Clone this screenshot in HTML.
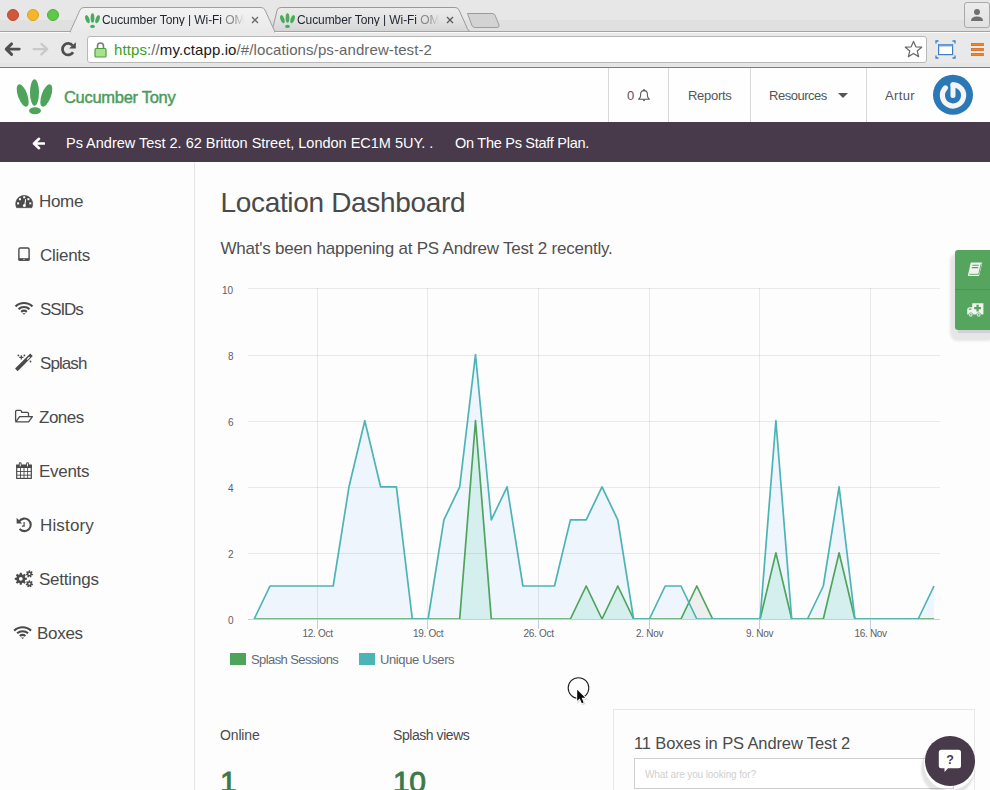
<!DOCTYPE html>
<html><head><meta charset="utf-8">
<style>
*{box-sizing:border-box;margin:0;padding:0}
html,body{width:990px;height:790px;overflow:hidden;background:#fdfdfd;font-family:"Liberation Sans",sans-serif;color:#4a4a4a}
.abs{position:absolute}
.t{position:absolute;white-space:nowrap;line-height:1}

</style></head><body>
<!-- browser chrome -->
<svg class="abs" style="left:0;top:0" width="990" height="68" viewBox="0 0 990 68">
  <rect x="0" y="0" width="990" height="68" fill="#e7e7e7"/>
  <rect x="0" y="20" width="990" height="12" fill="#e0e0e0"/>
  <!-- inactive tab 2 -->
  <defs>
    <linearGradient id="tg2" x1="0" y1="0" x2="0" y2="1">
      <stop offset="0" stop-color="#ececec"/><stop offset="0.5" stop-color="#e3e3e3"/><stop offset="1" stop-color="#d5d5d5"/>
    </linearGradient>
  </defs>
  <path d="M269.5,31.5 Q271.8,31.3 272.6,28.5 L277.2,10 Q278,7.5 281,7.5 L455,7.5 Q458,7.5 459,10 L467.4,28.5 Q468.3,31.3 470.5,31.5 Z" fill="url(#tg2)" stroke="#9a9a9a" stroke-width="1"/>
  <!-- new tab button -->
  <path d="M467.5,13.5 L492,13.5 Q494,13.5 495,15 L499,25 Q499.5,27.5 497,27.5 L475,27.5 Q473,27.5 472,25.5 Z" fill="#d3d3d3" stroke="#9c9c9c" stroke-width="1"/>
  <!-- toolbar -->
  <rect x="0" y="32" width="990" height="31" fill="#e9e9e9"/>
  <line x1="0" y1="31.5" x2="990" y2="31.5" stroke="#a3a3a3" stroke-width="1"/>
  <line x1="0" y1="32.5" x2="990" y2="32.5" stroke="#fafafa" stroke-width="1"/>
  <!-- active tab 1 -->
  <linearGradient id="tg1" x1="0" y1="0" x2="0" y2="1"><stop offset="0" stop-color="#f3f3f3"/><stop offset="1" stop-color="#e9e9e9"/></linearGradient>
  <path d="M70,32 L80,10 Q81,7.5 84,7.5 L261,7.5 Q264,7.5 265,10 L275,32 Z" fill="url(#tg1)" stroke="#a0a0a0" stroke-width="1"/>
  <rect x="71" y="31" width="203" height="3" fill="#e9e9e9"/>
  <!-- bottom border -->
  <rect x="0" y="63" width="990" height="4" fill="#e6e6e6"/>
  <rect x="0" y="67" width="990" height="1" fill="#7d7d7d"/>
</svg>

<!-- tab contents -->
<div class="abs" style="left:7px;top:9px;width:12px;height:12px;border-radius:50%;background:#d0573a;border:1px solid #b94a30"></div>
<div class="abs" style="left:27px;top:9px;width:12px;height:12px;border-radius:50%;background:#f5b62c;border:1px solid #dc9e1c"></div>
<div class="abs" style="left:47px;top:9px;width:12px;height:12px;border-radius:50%;background:#5ec84b;border:1px solid #4bb03a"></div>
<svg class="abs" style="left:84px;top:12px" width="17" height="17" viewBox="0 0 40 40">
  <g fill="#4caa5c"><ellipse cx="8" cy="17" rx="4.6" ry="10" transform="rotate(-18 8 17)"/><ellipse cx="20" cy="14" rx="4.4" ry="11"/><ellipse cx="32" cy="17" rx="4.6" ry="10" transform="rotate(18 32 17)"/><ellipse cx="20" cy="34" rx="5.5" ry="3.8"/></g>
</svg>
<div class="t" style="left:102px;top:13.6px;width:142px;overflow:hidden;font-size:12px;color:#1f2430;letter-spacing:-0.08px;-webkit-mask-image:linear-gradient(90deg,#000 93%,transparent 100%)">Cucumber Tony | Wi-Fi <span style="color:#888">OM</span></div>
<svg class="abs" style="left:251px;top:16px" width="8" height="8" viewBox="0 0 8 8"><path d="M1,1 L7,7 M7,1 L1,7" stroke="#6a6a6a" stroke-width="1.3"/></svg>
<svg class="abs" style="left:279px;top:12px" width="17" height="17" viewBox="0 0 40 40">
  <g fill="#4caa5c"><ellipse cx="8" cy="17" rx="4.6" ry="10" transform="rotate(-18 8 17)"/><ellipse cx="20" cy="14" rx="4.4" ry="11"/><ellipse cx="32" cy="17" rx="4.6" ry="10" transform="rotate(18 32 17)"/><ellipse cx="20" cy="34" rx="5.5" ry="3.8"/></g>
</svg>
<div class="t" style="left:297px;top:13.6px;width:142px;overflow:hidden;font-size:12px;color:#1f2430;letter-spacing:-0.08px;-webkit-mask-image:linear-gradient(90deg,#000 93%,transparent 100%)">Cucumber Tony | Wi-Fi <span style="color:#888">OM</span></div>
<svg class="abs" style="left:446px;top:16px" width="8" height="8" viewBox="0 0 8 8"><path d="M1,1 L7,7 M7,1 L1,7" stroke="#5a5a5a" stroke-width="1.3"/></svg>
<!-- profile button -->
<div class="abs" style="left:964px;top:2px;width:26px;height:26px;border:1px solid #a9a9a9;border-radius:3px;background:linear-gradient(#ececec,#e2e2e2)"></div>
<svg class="abs" style="left:969px;top:6.8px" width="16" height="16" viewBox="0 0 16 16"><circle cx="8" cy="5" r="3" fill="#6f6f6f"/><path d="M2,14 Q2,9.5 8,9.5 Q14,9.5 14,14 Z" fill="#6f6f6f"/></svg>
<!-- toolbar icons -->
<svg class="abs" style="left:0px;top:41px" width="24" height="16" viewBox="0 0 24 16"><path d="M19.2,8.1 H6.5 M11.6,2.9 L6.2,8.1 L11.6,13.4" fill="none" stroke="#505050" stroke-width="2.9" stroke-linecap="round" stroke-linejoin="round"/></svg>
<svg class="abs" style="left:28px;top:41px" width="24" height="16" viewBox="0 0 24 16"><path d="M5.6,8.1 H19.2 M13.4,2.9 L19.2,8.1 L13.4,13.4" fill="none" stroke="#c9c9c9" stroke-width="2.3" stroke-linecap="round" stroke-linejoin="round"/></svg>
<svg class="abs" style="left:60px;top:41px" width="18" height="17" viewBox="0 0 18 17"><path d="M13.08,11.25 A5.75,5.75 0 1 1 12.6,4.5" fill="none" stroke="#4e4e4e" stroke-width="2.7"/><path d="M9.1,7.6 L15.8,7.6 L15.8,1.2 Z" fill="#4e4e4e"/></svg>
<!-- url box -->
<div class="abs" style="left:87px;top:36px;width:840px;height:27px;background:#fff;border:1px solid #b8b8b8;border-radius:3px"></div>
<svg class="abs" style="left:94px;top:41px" width="13" height="17" viewBox="0 0 13 17"><path d="M3.5,8 V5 A3,3 0 0 1 9.5,5 V8" fill="none" stroke="#7a7a7a" stroke-width="1.6"/><rect x="1" y="7.5" width="11" height="8.5" rx="1" fill="#a9e28f" stroke="#4e9e3a" stroke-width="1.2"/></svg>
<div class="t" style="left:114px;top:42px;font-size:15px;letter-spacing:0.1px;color:#666"><span style="color:#3aa11c">https</span>://<span style="color:#1a1a1a">my.ctapp.io</span>/#/locations/ps-andrew-test-2</div>
<svg class="abs" style="left:904px;top:40px" width="19" height="19" viewBox="0 0 20 20"><path d="M10,1.5 L12.5,7.2 L18.6,7.6 L13.9,11.5 L15.4,17.5 L10,14.2 L4.6,17.5 L6.1,11.5 L1.4,7.6 L7.5,7.2 Z" fill="#fff" stroke="#6a6a6a" stroke-width="1.3" stroke-linejoin="round"/></svg>
<svg class="abs" style="left:935px;top:40px" width="21" height="19" viewBox="0 0 21 19"><rect x="3.6" y="4.6" width="14" height="10" fill="#fff" stroke="#3f7fc0" stroke-width="1.2"/><rect x="3.6" y="4.2" width="14" height="2.2" fill="#6a9fd6"/><path d="M1,3.5 V1 H3.5 M17.5,1 H20 V3.5 M20,15.5 V18 H17.5 M3.5,18 H1 V15.5" fill="none" stroke="#3f7fc0" stroke-width="1.3"/></svg>
<svg class="abs" style="left:970px;top:41px" width="16" height="16" viewBox="0 0 16 16"><rect x="1.5" y="2.3" width="12" height="2.4" fill="#ee8526" stroke="#c95d18" stroke-width="0.6"/><rect x="1.5" y="7.3" width="12" height="2.4" fill="#ee8526" stroke="#c95d18" stroke-width="0.6"/><rect x="1.5" y="12.3" width="12" height="2.4" fill="#ee8526" stroke="#c95d18" stroke-width="0.6"/></svg>

<!-- app header -->
<div class="abs" style="left:0;top:68px;width:990px;height:54px;background:#fefefe"></div>
<svg class="abs" style="left:14px;top:77px" width="42" height="40" viewBox="0 0 42 40">
  <g fill="#4ea45c">
    <ellipse cx="8.7" cy="18.5" rx="4.7" ry="11.8" transform="rotate(-20 8.7 18.5)"/>
    <ellipse cx="20.5" cy="15.5" rx="4.5" ry="13.2"/>
    <ellipse cx="32.3" cy="18.5" rx="4.7" ry="11.8" transform="rotate(20 32.3 18.5)"/>
    <ellipse cx="21" cy="33.8" rx="6" ry="3.5"/>
  </g>
</svg>
<div class="t" style="left:64px;top:89.2px;font-size:16.5px;color:#4a9c5a;-webkit-text-stroke:0.45px #4a9c5a;letter-spacing:-0.3px">Cucumber Tony</div>
<div class="abs" style="left:608px;top:68px;width:1px;height:54px;background:#d8d8d8"></div>
<div class="abs" style="left:668px;top:68px;width:1px;height:54px;background:#d8d8d8"></div>
<div class="abs" style="left:750px;top:68px;width:1px;height:54px;background:#d8d8d8"></div>
<div class="abs" style="left:866px;top:68px;width:1px;height:54px;background:#d8d8d8"></div>
<div class="t" style="left:627px;top:89px;font-size:13px;color:#555">0</div>
<svg class="abs" style="left:637px;top:88px" width="14" height="15" viewBox="0 0 14 15"><circle cx="7" cy="1.9" r="0.9" fill="#555"/><path d="M1.6,11.2 Q3.6,9.6 3.6,7.4 V6.3 Q3.6,2.6 7,2.6 Q10.4,2.6 10.4,6.3 V7.4 Q10.4,9.6 12.4,11.2 Z" fill="none" stroke="#555" stroke-width="1.05" stroke-linejoin="round"/><path d="M5.6,11.8 Q7,14.6 8.4,11.8 Z" fill="#555"/></svg>
<div class="t" style="left:688px;top:89px;font-size:13px;color:#555;letter-spacing:-0.28px">Reports</div>
<div class="t" style="left:769px;top:89px;font-size:13px;color:#555;letter-spacing:-0.48px">Resources</div>
<svg class="abs" style="left:837px;top:92px" width="12" height="7" viewBox="0 0 12 7"><path d="M1,1 H11 L6,6 Z" fill="#555"/></svg>
<div class="t" style="left:885px;top:89px;font-size:13px;color:#555;letter-spacing:0.36px">Artur</div>
<svg class="abs" style="left:932px;top:74px" width="42" height="42" viewBox="0 0 42 42"><circle cx="21" cy="20.8" r="20" fill="#2b78b6"/><path d="M21,10.8 V21.5" stroke="#f4f4f4" stroke-width="5" stroke-linecap="round"/><path d="M21,10.8 A10.6,10.6 0 1 1 13.5,13.9" fill="none" stroke="#f4f4f4" stroke-width="5.2" stroke-linecap="round"/></svg>

<!-- purple bar -->
<div class="abs" style="left:0;top:122px;width:990px;height:40px;background:#483a4a"></div>
<svg class="abs" style="left:32px;top:137px" width="13" height="13" viewBox="0 0 13 13"><path d="M12,6.5 H2.5 M7,1.8 L2,6.5 L7,11.2" fill="none" stroke="#fff" stroke-width="2.6" stroke-linecap="round" stroke-linejoin="round"/></svg>
<div class="t" style="left:66px;top:136px;font-size:14.5px;color:#fff;letter-spacing:-0.01px">Ps Andrew Test 2. 62 Britton Street, London EC1M 5UY. .</div>
<div class="t" style="left:455px;top:136px;font-size:14.5px;color:#fff;letter-spacing:-0.27px">On The Ps Staff Plan.</div>

<!-- sidebar -->
<div class="abs" style="left:194px;top:162px;width:1px;height:628px;background:#e4e4e4"></div>
<div id="navs">
<div class="t" style="left:39px;top:192.6px;font-size:17px;letter-spacing:-0.33px">Home</div>
<div class="t" style="left:40px;top:246.6px;font-size:17px;letter-spacing:-0.28px">Clients</div>
<div class="t" style="left:40px;top:300.6px;font-size:17px;letter-spacing:-1.1px">SSIDs</div>
<div class="t" style="left:40px;top:354.6px;font-size:17px;letter-spacing:-0.92px">Splash</div>
<div class="t" style="left:39px;top:408.6px;font-size:17px;letter-spacing:-0.5px">Zones</div>
<div class="t" style="left:39px;top:462.6px;font-size:17px;letter-spacing:-0.3px">Events</div>
<div class="t" style="left:40px;top:516.6px;font-size:17px;letter-spacing:0.16px">History</div>
<div class="t" style="left:39px;top:570.6px;font-size:17px;letter-spacing:-0.22px">Settings</div>
<div class="t" style="left:37px;top:624.6px;font-size:17px;letter-spacing:-0.3px">Boxes</div>
</div>
<svg class="abs" style="left:0;top:0" width="194" height="790" viewBox="0 0 194 790">
<path d="M16.6,207.7 A8.5,8.5 0 1 1 31.8,207.7 Z" fill="#4a4a4a" stroke="#4a4a4a" stroke-width="0.6" stroke-linejoin="round"/>
<rect x="17.1" y="202.4" width="2" height="2" fill="#fdfdfd"/>
<rect x="19.0" y="198.2" width="2" height="2" fill="#fdfdfd"/>
<rect x="23.2" y="196.3" width="2" height="2" fill="#fdfdfd"/>
<rect x="27.4" y="198.2" width="2" height="2" fill="#fdfdfd"/>
<rect x="29.3" y="202.4" width="2" height="2" fill="#fdfdfd"/>
<path d="M25.6,199.6 L24.9,204.6" stroke="#fdfdfd" stroke-width="1.1" stroke-linecap="round"/>
<circle cx="24.4" cy="205.6" r="1.5" fill="#fdfdfd"/>
<rect x="18.9" y="248" width="10.2" height="12.1" rx="1.3" fill="none" stroke="#4a4a4a" stroke-width="1.4"/>
<rect x="18.5" y="258.2" width="11" height="2.5" fill="#4a4a4a"/>
<circle cx="24" cy="259.3" r="0.6" fill="#fdfdfd"/>
<path d="M15.53,306.42 A12.20,12.20 0 0 1 32.47,306.42" fill="none" stroke="#4a4a4a" stroke-width="2.1" stroke-linecap="butt"/><path d="M18.51,309.11 A8.20,8.20 0 0 1 29.49,309.11" fill="none" stroke="#4a4a4a" stroke-width="2.1" stroke-linecap="butt"/><path d="M21.17,311.83 A4.40,4.40 0 0 1 26.83,311.83" fill="none" stroke="#4a4a4a" stroke-width="2.1" stroke-linecap="butt"/><path d="M22.40,313.20 L25.60,313.20 L24.00,314.80 Z" fill="#4a4a4a"/>
<path d="M14.13,630.62 A12.20,12.20 0 0 1 31.07,630.62" fill="none" stroke="#4a4a4a" stroke-width="2.1" stroke-linecap="butt"/><path d="M17.11,633.31 A8.20,8.20 0 0 1 28.09,633.31" fill="none" stroke="#4a4a4a" stroke-width="2.1" stroke-linecap="butt"/><path d="M19.77,636.03 A4.40,4.40 0 0 1 25.43,636.03" fill="none" stroke="#4a4a4a" stroke-width="2.1" stroke-linecap="butt"/><path d="M21.00,637.40 L24.20,637.40 L22.60,639.00 Z" fill="#4a4a4a"/>
<path d="M17.6,368.6 L30.2,356" stroke="#4a4a4a" stroke-width="3.6" stroke-linecap="square"/>
<path d="M27.0,359.6 L29.6,357.0" stroke="#fdfdfd" stroke-width="1.1"/>
<path d="M21.3,355.3 L21.3,359.5 M19.2,357.4 L23.4,357.4" stroke="#4a4a4a" stroke-width="1.2"/>
<circle cx="18.4" cy="355.4" r="0.9" fill="#4a4a4a"/>
<circle cx="24.4" cy="355.4" r="0.9" fill="#4a4a4a"/>
<circle cx="30.5" cy="361.5" r="0.9" fill="#4a4a4a"/>
<path d="M15.6,421.3 V411.4 Q15.6,410.3 16.7,410.3 H20.3 Q21.3,410.3 21.5,411.4 L21.7,412.3 H27.3 Q28.5,412.3 28.5,413.5 V416.3" fill="none" stroke="#4a4a4a" stroke-width="1.3" stroke-linejoin="round"/>
<path d="M15.8,421.9 L19.6,416.6 H32.4 L28.6,421.9 Z" fill="none" stroke="#4a4a4a" stroke-width="1.3" stroke-linejoin="round"/>
<rect x="16.7" y="465.2" width="14.6" height="13.2" fill="none" stroke="#4a4a4a" stroke-width="1.2"/>
<rect x="16.4" y="464.8" width="15.2" height="3.2" fill="#4a4a4a"/>
<path d="M20.5,468 V478.6 M24,468 V478.6 M27.6,468 V478.6 M16.7,471.5 H31.3 M16.7,475.2 H31.3" stroke="#4a4a4a" stroke-width="0.9"/>
<rect x="18.9" y="462.3" width="2.6" height="5.2" rx="1" fill="#4a4a4a"/>
<rect x="19.8" y="463.4" width="0.9" height="3" fill="#fdfdfd"/>
<rect x="26.2" y="462.3" width="2.6" height="5.2" rx="1" fill="#4a4a4a"/>
<rect x="27.1" y="463.4" width="0.9" height="3" fill="#fdfdfd"/>
<path d="M19.3,521.2 A6.3,6.3 0 1 1 19.6,528.9" fill="none" stroke="#4a4a4a" stroke-width="2.1"/>
<path d="M16.6,517.8 L16.6,523.4 L22.2,523.4 Z" fill="#4a4a4a"/>
<path d="M24.1,521.9 V526.2 H21.9" fill="none" stroke="#4a4a4a" stroke-width="1.2"/>
<path fill-rule="evenodd" d="M20.18,574.24 L19.63,574.35 L19.85,572.77 L21.75,572.77 L21.97,574.35 L23.59,575.14 L23.11,574.82 L24.39,573.87 L25.73,575.21 L24.78,576.49 L25.36,578.18 L25.25,577.63 L26.83,577.85 L26.83,579.75 L25.25,579.97 L24.46,581.59 L24.78,581.11 L25.73,582.39 L24.39,583.73 L23.11,582.78 L21.42,583.36 L21.97,583.25 L21.75,584.83 L19.85,584.83 L19.63,583.25 L18.01,582.46 L18.49,582.78 L17.21,583.73 L15.87,582.39 L16.82,581.11 L16.24,579.42 L16.35,579.97 L14.77,579.75 L14.77,577.85 L16.35,577.63 L17.14,576.01 L16.82,576.49 L15.87,575.21 L17.21,573.87 L18.49,574.82 Z M22.70,578.80 A1.90,1.90 0 1 0 18.90,578.80 A1.90,1.90 0 1 0 22.70,578.80 Z" fill="#4a4a4a"/>
<path fill-rule="evenodd" d="M29.05,571.32 L28.60,571.43 L28.75,570.26 L30.05,570.26 L30.20,571.43 L31.19,572.02 L30.84,571.73 L31.85,571.12 L32.65,572.13 L31.83,572.98 L31.99,574.13 L31.99,573.67 L33.10,574.08 L32.81,575.34 L31.63,575.23 L30.84,576.07 L31.19,575.78 L31.56,576.90 L30.40,577.46 L29.75,576.48 L28.60,576.37 L29.05,576.48 L28.40,577.46 L27.24,576.90 L27.61,575.78 L26.97,574.82 L27.17,575.23 L25.99,575.34 L25.70,574.08 L26.81,573.67 L27.17,572.57 L26.97,572.98 L26.15,572.13 L26.95,571.12 L27.96,571.73 Z M30.40,573.90 A1.00,1.00 0 1 0 28.40,573.90 A1.00,1.00 0 1 0 30.40,573.90 Z" fill="#4a4a4a"/>
<path fill-rule="evenodd" d="M29.05,581.22 L28.60,581.33 L28.75,580.16 L30.05,580.16 L30.20,581.33 L31.19,581.92 L30.84,581.63 L31.85,581.02 L32.65,582.03 L31.83,582.88 L31.99,584.03 L31.99,583.57 L33.10,583.98 L32.81,585.24 L31.63,585.13 L30.84,585.97 L31.19,585.68 L31.56,586.80 L30.40,587.36 L29.75,586.38 L28.60,586.27 L29.05,586.38 L28.40,587.36 L27.24,586.80 L27.61,585.68 L26.97,584.72 L27.17,585.13 L25.99,585.24 L25.70,583.98 L26.81,583.57 L27.17,582.47 L26.97,582.88 L26.15,582.03 L26.95,581.02 L27.96,581.63 Z M30.40,583.80 A1.00,1.00 0 1 0 28.40,583.80 A1.00,1.00 0 1 0 30.40,583.80 Z" fill="#4a4a4a"/>
</svg>

<!-- content -->
<div class="t" style="left:220.5px;top:188.6px;font-size:28px;letter-spacing:-0.33px;color:#4a4a4a">Location Dashboard</div>
<div class="t" style="left:220.5px;top:240.2px;font-size:17px;letter-spacing:-0.22px;color:#505050">What's been happening at PS Andrew Test 2 recently.</div>

<!-- chart -->
<svg class="abs" style="left:0;top:0" width="990" height="790" viewBox="0 0 990 790">
<defs><clipPath id="tclip"><path d="M254.2,619.0 L254.2,619.0 270.0,586.0 285.8,586.0 301.6,586.0 317.4,586.0 333.2,586.0 349.0,486.8 364.8,420.7 380.6,486.8 396.4,486.8 412.3,619.0 428.1,619.0 443.9,519.9 459.7,486.8 475.5,354.6 491.3,519.9 507.1,486.8 522.9,586.0 538.7,586.0 554.5,586.0 570.4,519.9 586.2,519.9 602.0,486.8 617.8,519.9 633.6,619.0 649.4,619.0 665.2,586.0 681.0,586.0 696.8,619.0 712.6,619.0 728.5,619.0 744.3,619.0 760.1,619.0 775.9,420.7 791.7,619.0 807.5,619.0 823.3,586.0 839.1,486.8 854.9,619.0 870.8,619.0 886.6,619.0 902.4,619.0 918.2,619.0 934.0,586.0 L934.0,619.0 Z"/></clipPath></defs>
<path d="M254.2,619.0 L254.2,619.0 270.0,586.0 285.8,586.0 301.6,586.0 317.4,586.0 333.2,586.0 349.0,486.8 364.8,420.7 380.6,486.8 396.4,486.8 412.3,619.0 428.1,619.0 443.9,519.9 459.7,486.8 475.5,354.6 491.3,519.9 507.1,486.8 522.9,586.0 538.7,586.0 554.5,586.0 570.4,519.9 586.2,519.9 602.0,486.8 617.8,519.9 633.6,619.0 649.4,619.0 665.2,586.0 681.0,586.0 696.8,619.0 712.6,619.0 728.5,619.0 744.3,619.0 760.1,619.0 775.9,420.7 791.7,619.0 807.5,619.0 823.3,586.0 839.1,486.8 854.9,619.0 870.8,619.0 886.6,619.0 902.4,619.0 918.2,619.0 934.0,586.0 L934.0,619.0 Z" fill="#eef5fc"/>
<path d="M254.2,619.0 L254.2,619.0 270.0,619.0 285.8,619.0 301.6,619.0 317.4,619.0 333.2,619.0 349.0,619.0 364.8,619.0 380.6,619.0 396.4,619.0 412.3,619.0 428.1,619.0 443.9,619.0 459.7,619.0 475.5,420.7 491.3,619.0 507.1,619.0 522.9,619.0 538.7,619.0 554.5,619.0 570.4,619.0 586.2,586.0 602.0,619.0 617.8,586.0 633.6,619.0 649.4,619.0 665.2,619.0 681.0,619.0 696.8,586.0 712.6,619.0 728.5,619.0 744.3,619.0 760.1,619.0 775.9,552.9 791.7,619.0 807.5,619.0 823.3,619.0 839.1,552.9 854.9,619.0 870.8,619.0 886.6,619.0 902.4,619.0 918.2,619.0 934.0,619.0 L934.0,619.0 Z" fill="#efeeee"/>
<path d="M254.2,619.0 L254.2,619.0 270.0,619.0 285.8,619.0 301.6,619.0 317.4,619.0 333.2,619.0 349.0,619.0 364.8,619.0 380.6,619.0 396.4,619.0 412.3,619.0 428.1,619.0 443.9,619.0 459.7,619.0 475.5,420.7 491.3,619.0 507.1,619.0 522.9,619.0 538.7,619.0 554.5,619.0 570.4,619.0 586.2,586.0 602.0,619.0 617.8,586.0 633.6,619.0 649.4,619.0 665.2,619.0 681.0,619.0 696.8,586.0 712.6,619.0 728.5,619.0 744.3,619.0 760.1,619.0 775.9,552.9 791.7,619.0 807.5,619.0 823.3,619.0 839.1,552.9 854.9,619.0 870.8,619.0 886.6,619.0 902.4,619.0 918.2,619.0 934.0,619.0 L934.0,619.0 Z" fill="#d5efef" clip-path="url(#tclip)"/>
  <g fill="rgba(0,0,0,0.08)">
    <rect x="248" y="288" width="692" height="1"/>
    <rect x="248" y="355" width="692" height="1"/>
    <rect x="248" y="421" width="692" height="1"/>
    <rect x="248" y="487" width="692" height="1"/>
    <rect x="248" y="553" width="692" height="1"/>
    <rect x="317" y="288" width="1" height="331"/>
    <rect x="427" y="288" width="1" height="331"/>
    <rect x="538" y="288" width="1" height="331"/>
    <rect x="649" y="288" width="1" height="331"/>
    <rect x="759" y="288" width="1" height="331"/>
    <rect x="870" y="288" width="1" height="331"/>
  </g>
<polyline points="254.2,619.0 270.0,619.0 285.8,619.0 301.6,619.0 317.4,619.0 333.2,619.0 349.0,619.0 364.8,619.0 380.6,619.0 396.4,619.0 412.3,619.0 428.1,619.0 443.9,619.0 459.7,619.0 475.5,420.7 491.3,619.0 507.1,619.0 522.9,619.0 538.7,619.0 554.5,619.0 570.4,619.0 586.2,586.0 602.0,619.0 617.8,586.0 633.6,619.0 649.4,619.0 665.2,619.0 681.0,619.0 696.8,586.0 712.6,619.0 728.5,619.0 744.3,619.0 760.1,619.0 775.9,552.9 791.7,619.0 807.5,619.0 823.3,619.0 839.1,552.9 854.9,619.0 870.8,619.0 886.6,619.0 902.4,619.0 918.2,619.0 934.0,619.0" fill="none" stroke="#4ea45a" stroke-width="1.7" stroke-linejoin="round"/>
<polyline points="254.2,619.0 270.0,586.0 285.8,586.0 301.6,586.0 317.4,586.0 333.2,586.0 349.0,486.8 364.8,420.7 380.6,486.8 396.4,486.8 412.3,619.0 428.1,619.0 443.9,519.9 459.7,486.8 475.5,354.6 491.3,519.9 507.1,486.8 522.9,586.0 538.7,586.0 554.5,586.0 570.4,519.9 586.2,519.9 602.0,486.8 617.8,519.9 633.6,619.0 649.4,619.0 665.2,586.0 681.0,586.0 696.8,619.0 712.6,619.0 728.5,619.0 744.3,619.0 760.1,619.0 775.9,420.7 791.7,619.0 807.5,619.0 823.3,586.0 839.1,486.8 854.9,619.0 870.8,619.0 886.6,619.0 902.4,619.0 918.2,619.0 934.0,586.0" fill="none" stroke="#4cb4b6" stroke-width="1.7" stroke-linejoin="round"/>
  <g fill="#c0d0e0">
    <rect x="248" y="619" width="692" height="1"/>
    <rect x="317" y="620" width="1" height="9"/>
    <rect x="427" y="620" width="1" height="9"/>
    <rect x="538" y="620" width="1" height="9"/>
    <rect x="649" y="620" width="1" height="9"/>
    <rect x="759" y="620" width="1" height="9"/>
    <rect x="870" y="620" width="1" height="9"/>
  </g>
</svg>
<div class="t" style="left:222px;top:286px;font-size:10px;color:#606060">10</div>
<div class="t" style="left:228px;top:352px;font-size:10px;color:#606060">8</div>
<div class="t" style="left:228px;top:418px;font-size:10px;color:#606060">6</div>
<div class="t" style="left:228px;top:484px;font-size:10px;color:#606060">4</div>
<div class="t" style="left:228px;top:550px;font-size:10px;color:#606060">2</div>
<div class="t" style="left:228px;top:616px;font-size:10px;color:#606060">0</div>
<div class="t" style="left:287.6px;top:629px;width:60px;text-align:center;font-size:10px;color:#606060;letter-spacing:-0.3px">12. Oct</div>
<div class="t" style="left:398.1px;top:629px;width:60px;text-align:center;font-size:10px;color:#606060;letter-spacing:-0.3px">19. Oct</div>
<div class="t" style="left:508.6px;top:629px;width:60px;text-align:center;font-size:10px;color:#606060;letter-spacing:-0.3px">26. Oct</div>
<div class="t" style="left:619.6px;top:629px;width:60px;text-align:center;font-size:10px;color:#606060;letter-spacing:-0.3px">2. Nov</div>
<div class="t" style="left:729.6px;top:629px;width:60px;text-align:center;font-size:10px;color:#606060;letter-spacing:-0.3px">9. Nov</div>
<div class="t" style="left:840.6px;top:629px;width:60px;text-align:center;font-size:10px;color:#606060;letter-spacing:-0.3px">16. Nov</div>
<!-- legend -->
<div class="abs" style="left:230px;top:653px;width:16px;height:12px;background:#4ea45a"></div>
<div class="t" style="left:251px;top:652.5px;font-size:13px;color:#646b75;letter-spacing:-0.59px">Splash Sessions</div>
<div class="abs" style="left:359px;top:653px;width:16px;height:12px;background:#4cb3b6"></div>
<div class="t" style="left:380px;top:652.5px;font-size:13px;color:#646b75;letter-spacing:-0.38px">Unique Users</div>

<!-- stats -->
<div class="t" style="left:220px;top:728px;font-size:14px;color:#4a4a4a;letter-spacing:-0.14px">Online</div>
<div class="t" style="left:393px;top:728px;font-size:14px;color:#4a4a4a;letter-spacing:-0.44px">Splash views</div>
<div class="t" style="left:220px;top:767px;font-size:30px;color:#3b7a47;-webkit-text-stroke:0.9px #3b7a47">1</div>
<div class="t" style="left:393px;top:767px;font-size:30px;color:#3b7a47;-webkit-text-stroke:0.9px #3b7a47;letter-spacing:-0.5px">10</div>

<!-- boxes panel -->
<div class="abs" style="left:613px;top:709px;width:362px;height:100px;border:1px solid #e8e8e8;background:#fdfdfd"></div>
<div class="t" style="left:634px;top:734.8px;font-size:16.5px;color:#4a4a4a;letter-spacing:-0.12px">11 Boxes in PS Andrew Test 2</div>
<div class="abs" style="left:634px;top:758px;width:320px;height:31px;border:1px solid #cfcfcf;background:#fff"></div>
<div class="t" style="left:645px;top:770.3px;font-size:10px;color:#d0d0d0;letter-spacing:-0.12px">What are you looking for?</div>

<!-- side widget -->
<div class="abs" style="left:950px;top:253px;width:45px;height:88px;border-radius:8px;background:#e6e6e6;filter:blur(0.8px)"></div>
<div class="abs" style="left:958px;top:330px;width:35px;height:3px;background:#d2d2d6;filter:blur(0.5px)"></div>
<div class="abs" style="left:955px;top:250px;width:40px;height:80px;border-radius:3px;background:#55a55e"></div>
<div class="abs" style="left:955px;top:289px;width:40px;height:1px;background:#4a9553"></div>
<svg class="abs" style="left:955px;top:250px" width="35" height="80" viewBox="955 250 35 80">
  <path d="M971.2,262.4 H981.6 Q982.4,262.4 982.2,263.3 L979.2,275.2 Q979,276.1 978,276.1 H968.8 Q967.7,276.1 968,275 L970.6,263.2 Q970.8,262.4 971.2,262.4 Z" fill="#f2f2f2"/>
  <path d="M972.4,265.3 H978.8 M971.9,267.6 H978.2" stroke="#55a55e" stroke-width="1.1"/>
  <path d="M969.2,274.3 H978.6 L981.3,263.6" fill="none" stroke="#55a55e" stroke-width="0.9"/>
  <path d="M972.2,303.2 H983.4 V314.6 H967.2 V310 Q967.2,307.3 970,307.3 H972.2 Z" fill="#f2f2f2"/>
  <path d="M968.6,309.8 Q968.6,308.6 970,308.6 H971.4 V309.8 Z" fill="#55a55e"/>
  <path d="M977.6,304.8 V311.6 M974.2,308.2 H981" stroke="#55a55e" stroke-width="2.3"/>
  <circle cx="970.8" cy="314.9" r="2.1" fill="#f2f2f2" stroke="#55a55e" stroke-width="0.7"/>
  <circle cx="978.8" cy="314.9" r="2.1" fill="#f2f2f2" stroke="#55a55e" stroke-width="0.7"/>
  <circle cx="970.8" cy="314.9" r="0.8" fill="#55a55e"/>
  <circle cx="978.8" cy="314.9" r="0.8" fill="#55a55e"/>
</svg>


<!-- help button -->
<div class="abs" style="left:924px;top:738px;width:52px;height:52px;border-radius:50%;box-shadow:-2px 5px 2px 1px rgba(0,0,0,0.11)"></div>
<div class="abs" style="left:925.2px;top:736px;width:49.6px;height:49.6px;border-radius:50%;background:#483a4a"></div>
<svg class="abs" style="left:936px;top:747px" width="28" height="28" viewBox="0 0 28 28"><path d="M5.3,2.7 H22.5 Q25,2.7 25,5.2 V18.7 Q25,21.2 22.5,21.2 H12 L8.5,25 V21.2 H5.3 Q2.8,21.2 2.8,18.7 V5.2 Q2.8,2.7 5.3,2.7 Z" fill="#fff"/><text x="14" y="16.5" font-family="Liberation Sans" font-weight="bold" font-size="12.5" text-anchor="middle" fill="#483a4a">?</text></svg>

<!-- cursor -->
<svg class="abs" style="left:566px;top:676px" width="28" height="32" viewBox="0 0 28 32"><circle cx="12.5" cy="12" r="10.3" fill="none" stroke="#222" stroke-width="1.1"/><g transform="translate(11.2,13.8)"><path d="M0.8,1 L0.8,12 L3.4,9.6 L5.4,14.4 L7.2,13.6 L5.3,9 L8.8,9 Z" fill="rgba(0,0,0,0.18)" stroke="rgba(0,0,0,0.1)" stroke-width="2"/><path d="M0,0 L0,11 L2.6,8.6 L4.6,13.4 L6.4,12.6 L4.5,8 L8,8 Z" fill="#fff" stroke="#fff" stroke-width="1.8" stroke-linejoin="round"/><path d="M0,0 L0,11 L2.6,8.6 L4.6,13.4 L6.4,12.6 L4.5,8 L8,8 Z" fill="#0a0a0a"/></g></svg>

</body></html>
